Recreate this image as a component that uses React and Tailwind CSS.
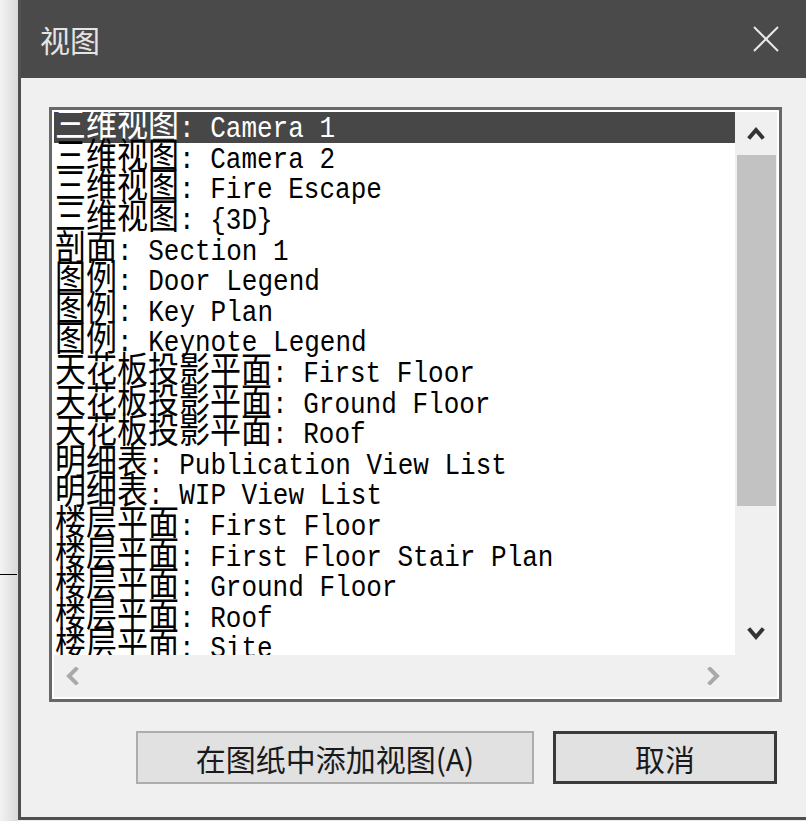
const items = [
  ['三维视图', 'Camera 1'],
  ['三维视图', 'Camera 2'],
  ['三维视图', 'Fire Escape'],
  ['三维视图', '{3D}'],
  ['剖面', 'Section 1'],
  ['图例', 'Door Legend'],
  ['图例', 'Key Plan'],
  ['图例', 'Keynote Legend'],
  ['天花板投影平面', 'First Floor'],
  ['天花板投影平面', 'Ground Floor'],
  ['天花板投影平面', 'Roof'],
  ['明细表', 'Publication View List'],
  ['明细表', 'WIP View List'],
  ['楼层平面', 'First Floor'],
  ['楼层平面', 'First Floor Stair Plan'],
  ['楼层平面', 'Ground Floor'],
  ['楼层平面', 'Roof'],
  ['楼层平面', 'Site'],
];

const cjk = { fontFamily: '"Noto Sans CJK SC", "Noto Sans", sans-serif' };
const mono = { fontFamily: '"Liberation Mono", "Noto Sans CJK SC", monospace' };

function Chevron({ dir, color = '#333333' }) {
  const pts = {
    up: '3,13 9,6 15,13',
    down: '3,5 9,12 15,5',
    left: '12,2 5,9 12,16',
    right: '5,2 12,9 5,16',
  }[dir];
  return (
    <svg width="18" height="18" viewBox="0 0 18 18">
      <polyline points={pts} fill="none" stroke={color} strokeWidth="4" strokeLinecap="square" />
    </svg>
  );
}

function Row({ label, name, selected }) {
  return (
    <div
      className={`h-[30.6px] shrink-0 pl-px pb-[7px] flex items-center whitespace-pre ${
        selected ? 'bg-[#474747] text-white' : 'text-black'
      }`}
    >
      <span className="inline-block scale-y-[1.15] leading-none">
        <span className="text-[31px]" style={cjk}>{label}</span>
        <span className="text-[26px]" style={mono}>{': ' + name}</span>
      </span>
    </div>
  );
}

export default function App() {
  return (
    <div className="w-[806px] h-[821px] flex bg-[#ececec] overflow-hidden">
      <div className="w-[18px] flex flex-col bg-gradient-to-r from-[#f3f3f3] to-[#d9d9d9]">
        <div className="h-[574px]" />
        <div className="h-px w-[17px] bg-black" />
      </div>

      <div className="flex-1 h-[820px] flex flex-col border-l-[3px] border-b-[3px] border-[#4f4f4f]">
        <div className="h-[78px] shrink-0 bg-[#4a4a4a] flex items-center justify-between pl-[19px] pr-[26px]">
          <span className="text-[30px] text-[#e4e4e4] leading-none" style={cjk}>视图</span>
          <svg width="28" height="28" viewBox="0 0 28 28">
            <line x1="2" y1="2" x2="26" y2="26" stroke="#e8e8e8" strokeWidth="2" />
            <line x1="26" y1="2" x2="2" y2="26" stroke="#e8e8e8" strokeWidth="2" />
          </svg>
        </div>

        <div className="flex-1 bg-[#f0f0f0] flex flex-col pt-[29px] pl-[28px] pr-[24px]">
          <div className="h-[595px] border-[3px] border-[#686868] bg-white p-[2px]">
            <div className="grid grid-cols-[681px_42px] grid-rows-[543px_42px]">
              <div className="flex flex-col overflow-hidden bg-white rounded-br-md">
                {items.map(([a, b], i) => (
                  <Row key={i} label={a} name={b} selected={i === 0} />
                ))}
              </div>
              <div className="bg-[#f0f0f0] flex flex-col">
                <div className="h-[41px] flex items-center justify-center pt-px">
                  <Chevron dir="up" />
                </div>
                <div className="h-[351px] mt-[2px] ml-[2px] mr-px bg-[#c2c2c2]" />
                <div className="flex-1" />
                <div className="h-[42px] flex items-center justify-center">
                  <Chevron dir="down" />
                </div>
              </div>
              <div className="bg-[#f0f0f0] flex items-center justify-between pl-[10px] pr-[12px]">
                <Chevron dir="left" color="#a9a9a9" />
                <Chevron dir="right" color="#a9a9a9" />
              </div>
              <div className="bg-[#f0f0f0]" />
            </div>
          </div>

          <div className="flex justify-end gap-[19px] mt-[29px] pr-[5px]">
            <button
              className="w-[398px] h-[53px] border-2 border-[#adadad] bg-[#e1e1e1] text-[30px] text-[#1a1a1a] leading-none"
              style={cjk}
            >
              在图纸中添加视图(A)
            </button>
            <button
              className="w-[224px] h-[53px] border-[3px] border-[#3a3a3a] bg-[#e1e1e1] text-[30px] text-[#1a1a1a] leading-none"
              style={cjk}
            >
              取消
            </button>
          </div>
        </div>
      </div>
    </div>
  );
}
